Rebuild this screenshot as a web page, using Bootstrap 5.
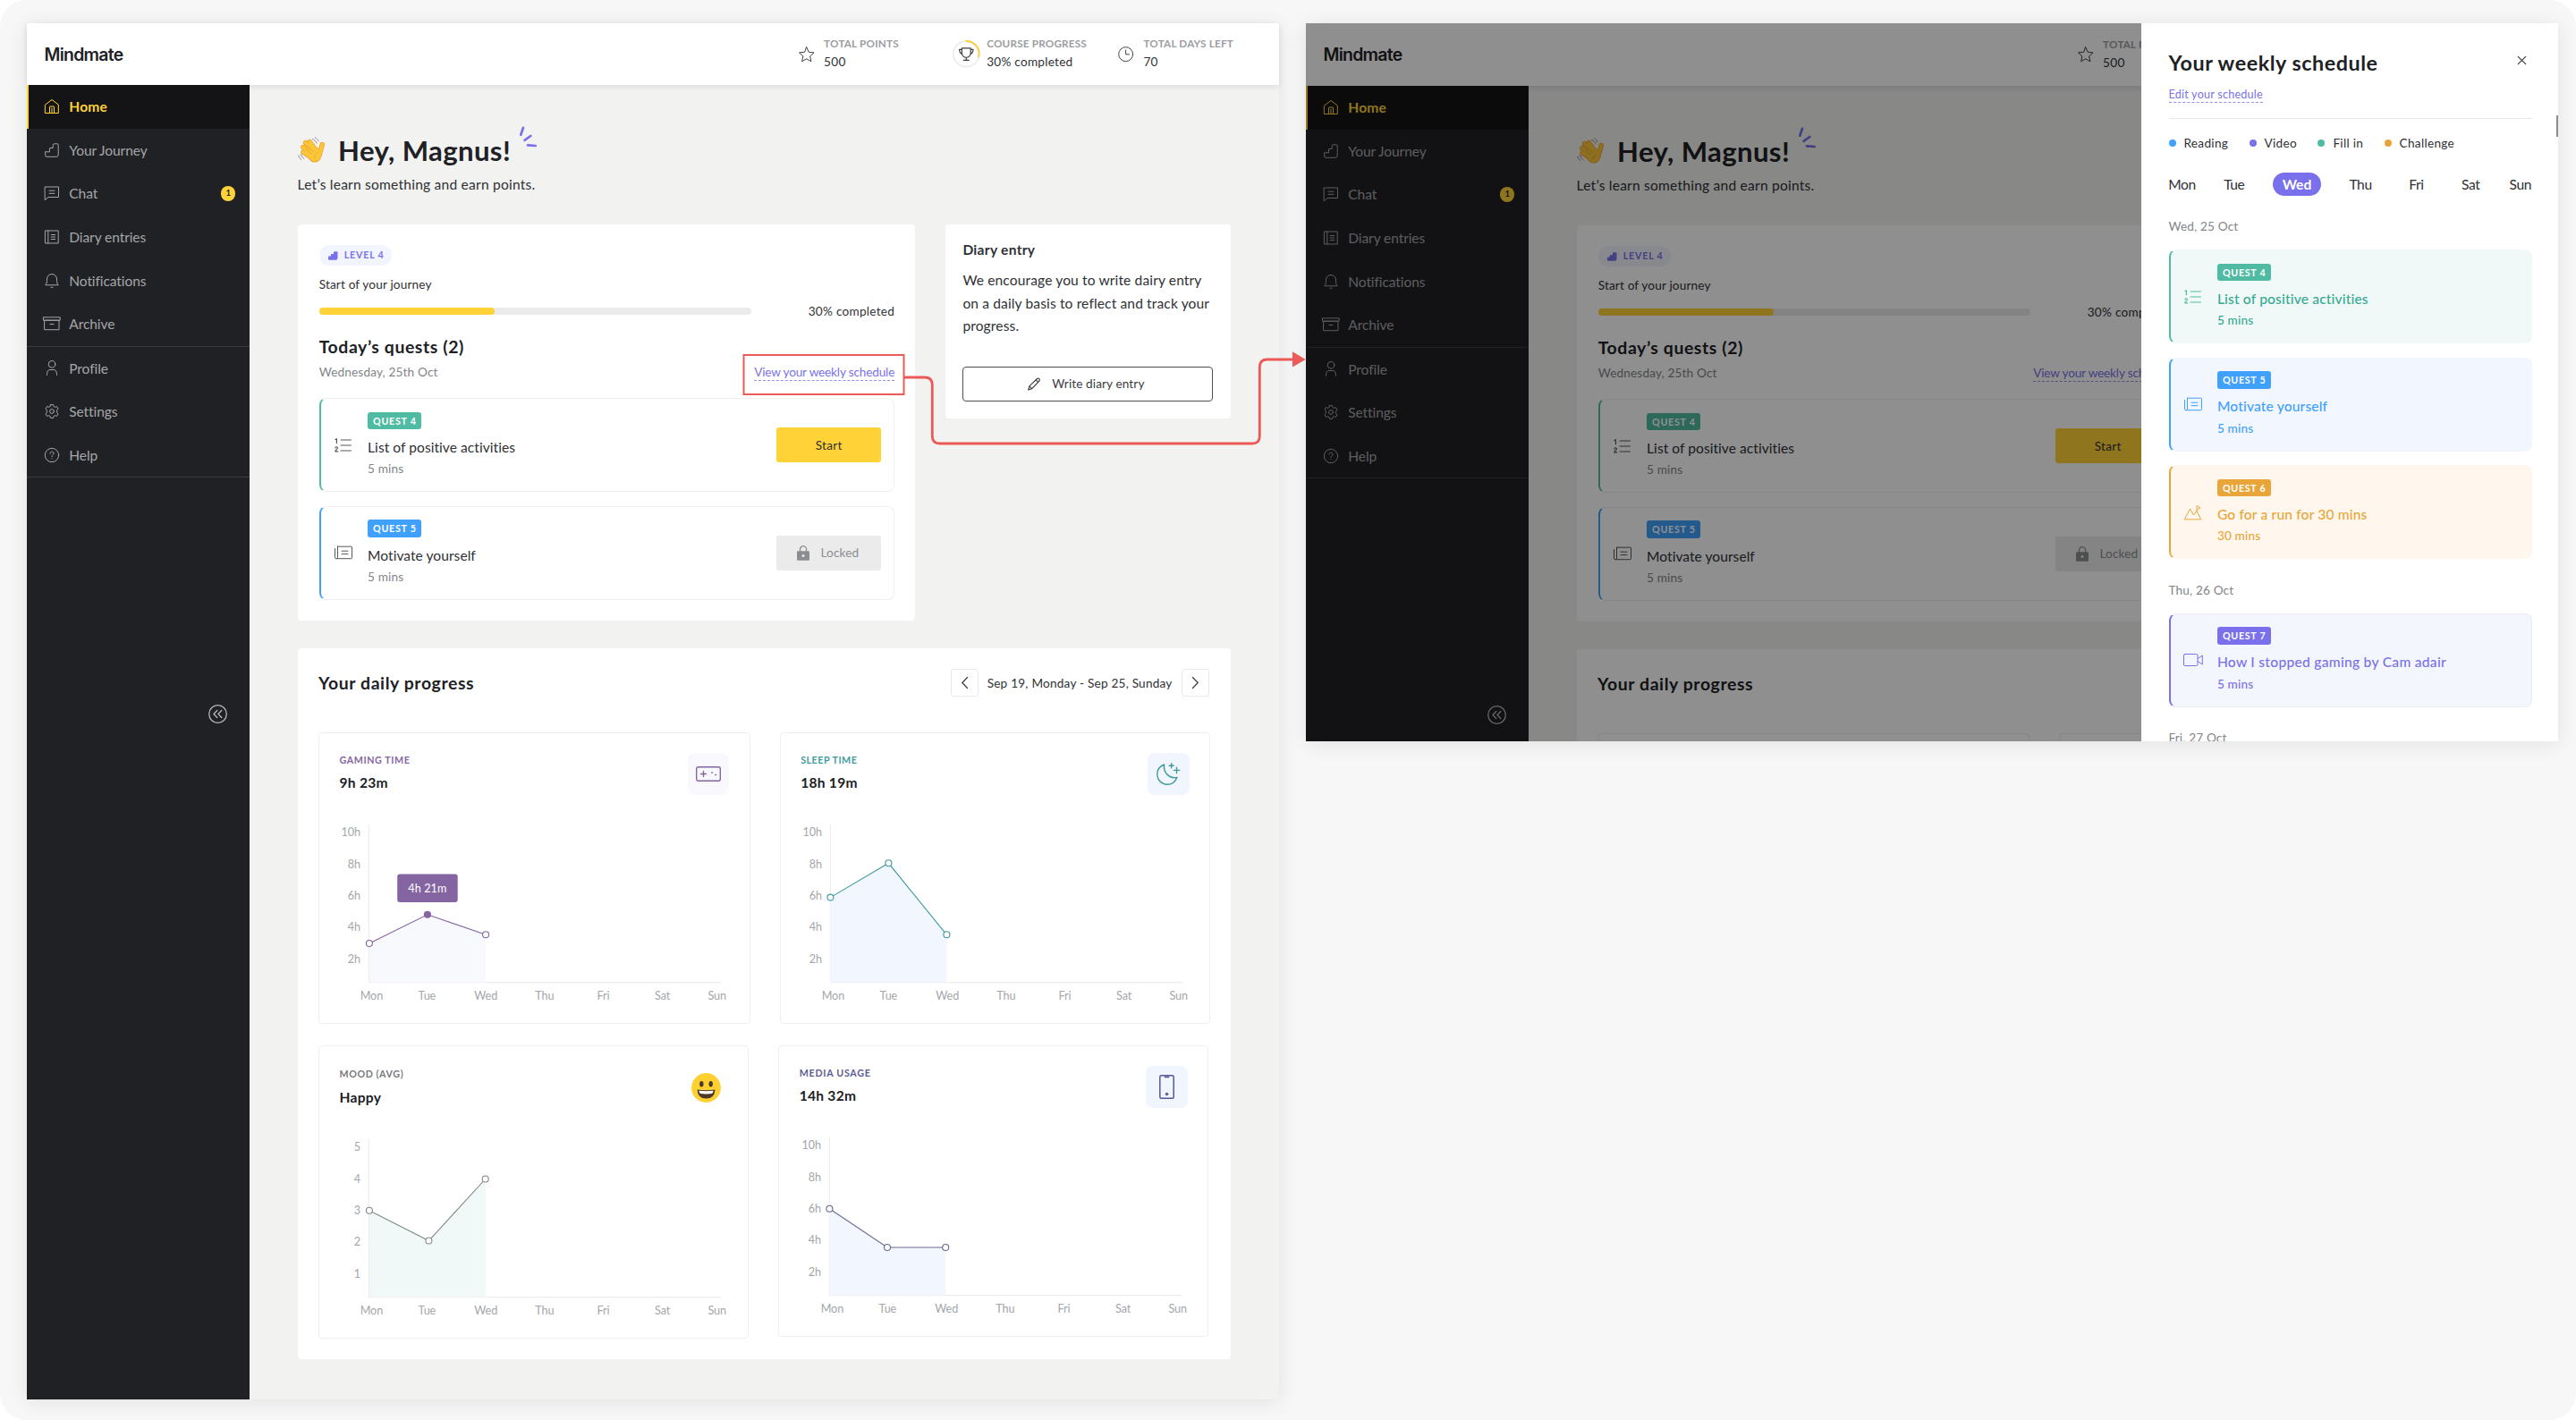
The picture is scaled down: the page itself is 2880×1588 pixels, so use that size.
<!DOCTYPE html>
<html lang="en">
<head>
<meta charset="utf-8">
<meta name="viewport" content="width=device-width, initial-scale=1">
<title>Mindmate</title>
<link href="https://cdn.jsdelivr.net/npm/bootstrap@5.3.0/dist/css/bootstrap.min.css" rel="stylesheet">
<style>
  body { font-family: Lato, "Open Sans", sans-serif; font-size: 15.55px; letter-spacing: .1px; color: #2f3136; background: #fff; overflow: hidden; }
  svg.ico { fill: none; stroke: currentColor; stroke-width: 1; stroke-linecap: round; stroke-linejoin: round; flex: none; overflow: visible; display: block; }
  .board { width: 2880px; height: 1588px; background: #f7f7f7; border-radius: 30px; padding: 26px 20px 0 30px; gap: 30px; }
  .screen { width: 1400px; flex: none; background: #f2f2f0; box-shadow: 0 3px 22px rgba(0,0,0,.09); --head: 69px; }
  .screen-full { height: 1538.5px; }
  .screen-short { height: 803.3px; --head: 70px; }

  /* top bar */
  .topbar { height: var(--head); flex: none; background: #fff; box-shadow: 0 2px 6px rgba(70,70,110,.13); z-index: 1; padding-left: 19.5px; }
  .brand { font: 600 19.4px/24px Inter, sans-serif; letter-spacing: -.72px; color: #202125; }
  .stat { line-height: 21px; font-size: 13.6px; letter-spacing: .25px; }
  .stat-a { width: 172px; } .stat-b { width: 185.2px; } .stat-c { width: 180px; }
  .stat-label { font-size: 11.7px; font-weight: 700; color: #9b9da1; letter-spacing: .2px; }

  /* sidebar */
  .side { width: 249px; background: #202125; color: #a5a6a8; z-index: 2; flex: none; }
  .side-item { height: 48.6px; flex: none; padding-left: 19.6px; padding-right: 15.6px; letter-spacing: -.1px; line-height: 24px; }
  .side-item svg { margin-right: 11.7px; }
  .side-item.on { background: #141416; color: #ffd237; font-weight: 700; letter-spacing: .2px; box-shadow: inset 2px 0 #ffd237; }
  .side-rule { height: 1px; flex: none; background: #3a3b3f; }
  .count-dot { width: 16.4px; height: 16.4px; border-radius: 50%; background: #ffd237; color: #202125; font-size: 9.5px; font-weight: 700; }
  .collapse-btn { margin: 254px 25px 0 0; color: #b5b6b8; }

  /* main */
  .main { padding: 53px 54.6px 0 53.6px; }
  .hello { font-size: 31.1px; line-height: 40px; font-weight: 700; letter-spacing: .38px; color: #202125; }
  .hello-sub { line-height: 24px; letter-spacing: .23px; margin-top: 6px; }
  .panel { background: #fff; border-radius: 4px; }
  .journey { width: 690.6px; height: 443px; padding: 23px 23px 0 24.1px; flex: none; }
  .level { height: 23px; padding: 0 8.2px 0 10.5px; border-radius: 12px; background: #f3f5fe; color: #7a72ea; font-size: 10.7px; font-weight: 700; letter-spacing: .8px; gap: 7px; }
  .t14 { font-size: 13.6px; line-height: 20px; letter-spacing: .16px; }
  .track { height: 8px; width: 483px; border-radius: 4px; background: #ebebeb; }
  .track > div { height: 8px; border-radius: 4px; background: #ffd237; }
  .h-20 { font-size: 19.4px; line-height: 26px; font-weight: 700; letter-spacing: .6px; color: #202125; }
  .soft { color: #828487; }
  .dash-link { color: #7a72ea; line-height: 17px; border-bottom: 1px dashed #8f93ee; letter-spacing: -.16px; font-size: 13.6px; text-decoration: none; }

  .quest { height: 104.9px; border: 1px solid #efefef; border-left: 2px solid var(--qc); border-radius: 8px; padding-right: 14.2px; }
  .quest + .quest { margin-top: 15.7px; }
  .quest-ico { width: 50.4px; margin-right: 2px; align-self: center; color: #55575b; }
  .quest-body { padding-top: 14.5px; }
  .quest-tag { width: fit-content; height: 19.6px; line-height: 19.6px; padding: 0 5.3px 0 6px; border-radius: 3px; background: var(--qc); color: #fff; font-size: 10.7px; font-weight: 700; letter-spacing: .72px; }
  .quest-name { line-height: 24px; margin-top: 7.5px; letter-spacing: .05px; }
  .green { --qc: #4fbba2; --qt: #36a992; --qb: #f1f9f8; }
  .blue { --qc: #3fa0fd; --qt: #3fa0fd; --qb: #f2f6fe; }
  .amber { --qc: #e9a539; --qt: #e9a539; --qb: #fff7ee; }
  .violet { --qc: #7a70ec; --qt: #7a70ec; --qb: #f3f6fd; }
  .act { width: 116.8px; height: 39px; border: 0; border-radius: 3px; background: #ffd237; color: #2f3136; font-size: 13.6px; letter-spacing: .28px; align-self: center; padding: 0; }
  .act-off { background: #ebebeb; color: #8b8d90; gap: 12.5px; letter-spacing: .12px; padding-right: 2px; }

  .diary { width: 318.8px; height: 217px; padding: 16px 19.4px 0 19.4px; }
  .diary-copy { line-height: 25.3px; margin: 10.3px 0 32.6px; letter-spacing: .135px; white-space: nowrap; }
  .act-line { width: 100%; height: 39px; border: 1.5px solid #4c4e52; border-radius: 4px; background: #fff; font-size: 13.6px; letter-spacing: .11px; gap: 12.5px; color: #3a3c40; padding: 0 4px 0 0; }

  .progress-panel { height: 794.7px; margin-top: 31.3px; padding: 23.2px 23px 0 23.5px; }
  .pager-btn { width: 31px; height: 31px; border: 1px solid #e9e9ea; border-radius: 3px; background: #fff; color: #3a3c40; padding: 0; }
  .tile-row { margin-top: 39.2px; gap: 33.2px; }
  .tile-row + .tile-row { margin-top: 24px; }
  .chart-box { height: 326px; border: 1px solid #efefef; border-radius: 4px; padding: 22.3px 22.2px 0 22.4px; flex: none; width: 481px; }
  .chart-wide { width: 482.5px; } .chart-tall { height: 328px; }
  .chart-head { height: 46.8px; }
  .chart-tall .chart-head { height: 49px; padding-top: 1px; }
  .metric { font-size: 10.7px; font-weight: 700; line-height: 16px; letter-spacing: .6px; }
  .metric-val { font-weight: 700; line-height: 24px; margin-top: 4.7px; letter-spacing: .28px; color: #202125; }
  .badge-tile { width: 46.8px; height: 46.8px; border-radius: 8px; background: #f1f5fe; }
  .plot { display: block; margin-top: 33px; overflow: visible; font-size: 12.6px; fill: #a3a6aa; letter-spacing: -.05px; }
  .plot .tip { fill: #fff; letter-spacing: .1px; }

  /* schedule drawer over the dimmed screen */
  .dim { inset: 0; background: rgba(0,0,0,.44); z-index: 5; }
  .drawer { top: 0; right: 0; bottom: 0; width: 466.4px; z-index: 6; background: #fff; padding: 28px 29px 0 30.9px; overflow: hidden; }
  .drawer h2 { font-size: 23.3px; line-height: 32px; font-weight: 700; letter-spacing: .55px; margin: 0; color: #202125; }
  .drawer .dash-link { font-size: 12.6px; line-height: 16px; letter-spacing: .22px; }
  .drawer-rule { height: 1px; background: #e8e8e8; margin: 17.5px 0 17.2px; }
  .key { font-size: 13.6px; line-height: 20px; letter-spacing: .3px; gap: 9px; margin-right: 23.4px; }
  .key i { width: 8px; height: 8px; border-radius: 50%; }
  .days { margin: 23.3px 0 24.3px; height: 25.4px; letter-spacing: -.4px; }
  .day { display: flex; justify-content: center; white-space: nowrap; }
  .day-on { width: 54px; height: 25.4px; border-radius: 13px; background: #7a70ec; color: #fff; font-weight: 700; letter-spacing: 0; }
  .drawer .quest { background: var(--qb); border-color: var(--qb); border-left-color: var(--qc); color: var(--qt); font-weight: 500; }
  .drawer .quest.violet { border-color: #eaecf2; border-left-color: var(--qc); }
  .drawer .quest-ico { color: var(--qc); }
  .drawer .quest-name { letter-spacing: .17px; }
  .drawer .violet .quest-name { letter-spacing: .3px; }
  .date-head { margin: 0 0 16px; }
  .quest + .date-head { margin-top: 24.5px; }
  .thumb { right: 0; top: 103px; width: 2px; height: 23.5px; background: #8b8c90; }
  .flow-line { left: 0; top: 0; z-index: 10; pointer-events: none; }
</style>
<script src="https://cdn.jsdelivr.net/npm/bootstrap@5.3.0/dist/js/bootstrap.bundle.min.js"></script>
</head>
<body>
<svg width="0" height="0" class="position-absolute">
  <symbol id="i-list" viewBox="0 0 19 16"><path d="M7 2h11.500M7 8h11.500M7 14h11.500" fill="none"/><path d="M1 1.500 2.400.7V5.600" fill="none" stroke-width="1.200"/><path d="M.8 10.900c.2-1.600 2.700-1.500 2.600.1-.1 1.200-2.200 2.200-2.600 3.900h2.900" fill="none" stroke-width="1.200"/></symbol>
  <symbol id="i-news" viewBox="0 0 20 16"><path d="M3.500 1.200h15.200q.8 0 .8.8v11.800q0 .9-.9.9H1.900Q.5 14.700.5 13.200V3.500M3.500 1.200v12q0 1.500-1.300 1.500M8 6.200h7M8 9.600h7" fill="none"/></symbol>
</svg>

<div class="board d-flex align-items-start position-relative">

  <div class="screen screen-full d-flex flex-column overflow-visible" id="home">
    <header class="topbar d-flex align-items-center position-relative">
      <div class="brand me-auto">Mindmate</div>
      <div class="stat stat-a d-flex align-items-center">
        <svg class="ico" width="17.500" height="17.500" viewBox="0 0 18 18" style="stroke:#3a3c40"><path d="m9 .8 2.500 5.600 6 .7-4.500 4.100 1.300 6L9 14.200l-5.300 3 1.300-6L.5 7.100l6-.7z"/></svg>
        <div style="margin:-3px 0 0 10.800px"><div class="stat-label">TOTAL POINTS</div><div>500</div></div>
      </div>
      <div class="stat stat-b d-flex align-items-center">
        <svg class="ico" width="30.600" height="30.600" viewBox="0 0 31 31" style="color:#3a3c40"><circle cx="15.500" cy="15.500" r="14.500" stroke="#ececec" stroke-width="1.800"/><path d="M15.500 1A14.500 14.500 0 0 1 29.600 18.800" stroke="#ffc93a" stroke-width="1.800"/><path d="M10.500 9h10v5.500a5 5 0 0 1-10 0zM10.500 10.500H7.700c0 3 .8 4.500 3.200 5M20.500 10.500h2.800c0 3-.8 4.500-3.200 5M15.500 19.500v3M12.500 22.600h6" stroke-width="1.200"/></svg>
        <div style="margin:-3px 0 0 7.800px"><div class="stat-label">COURSE PROGRESS</div><div>30% completed</div></div>
      </div>
      <div class="stat stat-c d-flex align-items-center">
        <svg class="ico" width="17.300" height="17.300" viewBox="0 0 18 18" style="color:#3a3c40"><circle cx="9" cy="9" r="8.300"/><path d="M9 4v5.200h4"/></svg>
        <div style="margin:-3px 0 0 11.100px"><div class="stat-label">TOTAL DAYS LEFT</div><div>70</div></div>
      </div>
    </header>

    <div class="d-flex flex-grow-1">
      <nav class="side d-flex flex-column">
        <div class="side-item on d-flex align-items-center"><svg class="ico" width="16" height="16" viewBox="0 0 16 16"><path d="M.7 6 8 .5 15.300 6v9.500H.7zM5.500 15.500V8.500q0-.5.500-.5h4q.5 0 .5.500v7M8 10v5.500"/></svg>Home</div>
        <div class="side-item d-flex align-items-center"><svg class="ico" width="16" height="16" viewBox="0 0 16 16"><path d="M.8 9.800h4.700V6q0-.5.500-.5h3.200V2.300q0-1.500 1.500-1.500h3.200q1.300 0 1.300 1.300v11q0 2.200-2.200 2.200H2q-1.200 0-1.200-1.200z"/></svg>Your Journey</div>
        <div class="side-item d-flex align-items-center"><svg class="ico" width="16" height="16" viewBox="0 0 16 16"><path d="M.5 1h15v11.500H4L.5 15.500zM5 5.200h6M5 8.300h6"/></svg>Chat<span class="count-dot d-flex align-items-center justify-content-center ms-auto">1</span></div>
        <div class="side-item d-flex align-items-center"><svg class="ico" width="16" height="16" viewBox="0 0 16 16"><path d="M.8 1h14.400v14H.8zM3.800 1v14M7.200 5.500h4.500M7.200 8h4.500M7.200 10.500h4.500"/></svg>Diary entries</div>
        <div class="side-item d-flex align-items-center"><svg class="ico" width="16" height="17" viewBox="0 0 16 17"><path d="M1 13.500c1.300-1.500 1.500-3 1.500-6.500a5.500 5.500 0 0 1 11 0c0 3.500.2 5 1.500 6.500zM7 16.300h2"/></svg>Notifications</div>
        <div class="side-item d-flex align-items-center"><svg class="ico" width="16" height="16" viewBox="0 0 16 16"><path d="M-1.200.8h18.400v3.400H-1.200zM0 4.200h16v10.500H0zM6 8.500h4"/></svg>Archive</div>
        <div class="side-rule"></div>
        <div class="side-item d-flex align-items-center"><svg class="ico" width="16" height="17" viewBox="0 0 16 17"><circle cx="8" cy="4.300" r="3.800"/><path d="M2.500 16.500c0-4 1-6 3.500-6h4c2.500 0 3.500 2 3.500 6"/></svg>Profile</div>
        <div class="side-item d-flex align-items-center"><svg class="ico" width="16" height="16" viewBox="0 0 16 16"><circle cx="8" cy="8" r="2.400"/><path d="M6.500.6h3l.5 2 1.400.7 2-.7 1.600 2.400-1.300 1.600v2.800l1.300 1.600-1.600 2.400-2-.7-1.400.7-.5 2h-3l-.5-2-1.400-.7-2 .7L1 11l1.300-1.600V6.600L1 5l1.600-2.400 2 .7L6 2.600z"/></svg>Settings</div>
        <div class="side-item d-flex align-items-center"><svg class="ico" width="16" height="16" viewBox="0 0 16 16"><circle cx="8" cy="8" r="7.700"/><path d="M5.900 6.200c.1-2.900 4.300-2.700 4.200-.1C10 7.700 8 7.600 8 9.500M8 11.700v.2"/></svg>Help</div>
        <div class="side-rule"></div>
        <div class="collapse-btn align-self-end"><svg class="ico" width="21" height="21" viewBox="0 0 21 21"><circle cx="10.500" cy="10.500" r="9.800" stroke-width="1.300"/><path d="m9.800 6.500-3.800 4 3.800 4M14.800 6.500l-3.800 4 3.800 4" stroke-width="1.300"/></svg></div>
      </nav>

      <main class="main flex-grow-1">
        <div class="hello d-flex align-items-center">
          <svg width="31" height="30" viewBox="0 0 31 30" fill="none" stroke-linecap="round" style="margin:-1px 14px 0 .5px"><g stroke="#e9a02f" stroke-width="5.400"><path d="M6 17l9 6M5.800 11.500 16 20M8.500 6.500 18 17M13.300 5.500 21 16M27.300 8.500 24.500 19"/></g><ellipse cx="18.800" cy="20" rx="7.900" ry="8.600" fill="#e9a02f"/><g stroke="#fbc638" stroke-width="3.900"><path d="M6 17l9 6M5.800 11.500 16 20M8.500 6.500 18 17M13.300 5.500 21 16M27.300 8.500 24.500 19"/></g><ellipse cx="18.900" cy="19.900" rx="7.100" ry="7.700" fill="#fbc638"/><path d="M9 14l6 5M11.500 10.500l6 6.500M22 18c-2.500 1-3.500 3-3.300 5.500" stroke="#e9a02f" stroke-width=".8"/><path d="M16.500 2.500c2 .8 3.600 2.300 4.500 4.500M19.300.8c1.800.9 3 2.100 3.700 4M3.500 19.500c.5 2.200 1.600 3.900 3.400 5M.8 21c.5 2 1.500 3.500 3 4.500" stroke="#8a8c90" stroke-width="1"/></svg>
          <span>Hey, Magnus!</span>
          <svg width="21" height="24" viewBox="0 0 21 24" fill="none" stroke="#7a70ec" stroke-width="2.700" stroke-linecap="round" style="margin:-30px 0 0 9px"><path d="M5 1.800 2.300 9.800M13.300 11l-6.800 4.800M10 21.300l8.800.7"/></svg>
        </div>
        <div class="hello-sub">Let’s learn something and earn points.</div>

        <div class="d-flex align-items-start justify-content-between" style="margin-top:33px">
          <section class="panel journey">
            <div class="d-flex"><div class="level d-flex align-items-center"><svg width="10.500" height="10" viewBox="0 0 11 10"><path d="M0 6.500q0-1 1-1h2V4q0-1 1-1h2.300V1q0-1 1-1H10q1 0 1 1v6q0 3-3 3H1Q0 10 0 9z" fill="#7a72ea"/></svg>LEVEL 4</div></div>
            <div class="t14" style="margin-top:11px">Start of your journey</div>
            <div class="d-flex align-items-center justify-content-between t14" style="margin-top:10px"><div class="track"><div style="width:40.700%"></div></div><span style="letter-spacing:.27px">30% completed</span></div>
            <div class="h-20" style="margin-top:16.500px">Today’s quests (2)</div>
            <div class="d-flex justify-content-between align-items-start t14 soft" style="margin:5px 0 19.900px"><span>Wednesday, 25th Oct</span><a class="dash-link" href="#" style="margin-top:2px">View your weekly schedule</a></div>
            <div class="quest green d-flex">
              <div class="quest-ico d-flex justify-content-center"><svg class="ico" width="19" height="16"><use href="#i-list"/></svg></div>
              <div class="quest-body"><div class="quest-tag">QUEST 4</div><div class="quest-name">List of positive activities</div><div class="t14 soft" style="margin-top:2.500px">5 mins</div></div>
              <button class="act ms-auto">Start</button>
            </div>
            <div class="quest blue d-flex">
              <div class="quest-ico d-flex justify-content-center"><svg class="ico" width="20" height="16"><use href="#i-news"/></svg></div>
              <div class="quest-body"><div class="quest-tag">QUEST 5</div><div class="quest-name">Motivate yourself</div><div class="t14 soft" style="margin-top:2.500px">5 mins</div></div>
              <button class="act act-off ms-auto d-flex align-items-center justify-content-center"><svg width="14" height="17" viewBox="0 0 14 17"><path d="M3.500 7V4.200a3.500 3.500 0 0 1 7 0V7" fill="none" stroke="#8b8d90" stroke-width="1.300"/><rect y="6.300" width="14" height="10.500" rx="1.200" fill="#8b8d90"/><circle cx="7" cy="11.600" r="1.500" fill="#ebebeb"/></svg>Locked</button>
            </div>
          </section>

          <section class="panel diary">
            <div style="font-weight:700;line-height:24px;letter-spacing:.3px">Diary entry</div>
            <div class="diary-copy">We encourage you to write dairy entry<br>on a daily basis to reflect and track your<br>progress.</div>
            <button class="act-line d-flex align-items-center justify-content-center"><svg class="ico" width="14.500" height="15" viewBox="0 0 15 15" style="stroke-width:1.200"><path d="M.8 14.200 2 10 10.800 1.300q1.200-1 2.400.2 1.200 1.200.2 2.400L4.800 12.900zM9.500 2.700l2.600 2.600M2 10l2.800 2.900"/></svg>Write diary entry</button>
          </section>
        </div>

        <section class="panel progress-panel">
          <div class="d-flex align-items-center justify-content-between">
            <div class="h-20">Your daily progress</div>
            <div class="pager d-flex align-items-center t14" style="gap:10px;letter-spacing:.22px;margin-right:1.200px">
              <button class="pager-btn d-flex align-items-center justify-content-center"><svg class="ico" width="7" height="13" viewBox="0 0 7 13" style="stroke-width:1.200"><path d="M6.500.5.8 6.500l5.700 6"/></svg></button>
              <span>Sep 19, Monday - Sep 25, Sunday</span>
              <button class="pager-btn d-flex align-items-center justify-content-center"><svg class="ico" width="7" height="13" viewBox="0 0 7 13" style="stroke-width:1.200"><path d="M.5.5l5.700 6-5.700 6"/></svg></button>
            </div>
          </div>
          <div class="tile-row d-flex">
            <div class="chart-box chart-wide">
              <div class="chart-head d-flex justify-content-between"><div><div class="metric" style="color:#8465a2">GAMING TIME</div><div class="metric-val">9h 23m</div></div>
              <div class="badge-tile d-flex align-items-center justify-content-center" style="background:#f9f9fd"><svg class="ico" width="28" height="17" viewBox="0 0 28 17" style="color:#8465a2"><rect x=".7" y=".7" width="26.600" height="15.600" rx="2" stroke-width="1.400"/><path d="M8.500 5.500v6M5.500 8.500h6" stroke-width="1.400"/><path d="M17.500 7h.8M21.700 9.500h.8" stroke-width="1.300"/></svg></div></div>
              <svg class="plot" data-kind="gaming"></svg>
            </div>
            <div class="chart-box">
              <div class="chart-head d-flex justify-content-between"><div><div class="metric" style="color:#3f9a9c;letter-spacing:.5px">SLEEP TIME</div><div class="metric-val">18h 19m</div></div>
              <div class="badge-tile d-flex align-items-center justify-content-center"><svg class="ico" width="26" height="25" viewBox="0 0 26 25" style="color:#3f9a9c;stroke-width:1.400"><path d="M8.500 2C3.500 4 .8 8 .8 12.800.8 19.500 6 24.300 12 24.300c5 0 9-2.800 11-7.800-8.500 1.500-15.500-5-14.500-14.500zM16.700.7v5M14.200 3.200h5M22.500 5.200v6.400M19.300 8.400h6.400"/></svg></div></div>
              <svg class="plot" data-kind="sleep"></svg>
            </div>
          </div>
          <div class="tile-row d-flex">
            <div class="chart-box chart-tall">
              <div class="chart-head d-flex justify-content-between"><div><div class="metric" style="color:#77797d">MOOD (AVG)</div><div class="metric-val" style="margin-top:6px">Happy</div></div>
              <svg width="33" height="33" viewBox="0 0 33 33" style="margin:7.500px 7.500px 0 0"><circle cx="16.500" cy="16.500" r="16.400" fill="#ffd02f"/><ellipse cx="11.300" cy="12.300" rx="2.200" ry="3.200" fill="#4a3a2a"/><ellipse cx="21.700" cy="12.300" rx="2.200" ry="3.200" fill="#4a3a2a"/><path d="M6.500 18.500q10 1.400 20 0Q26 28.500 16.500 28.500T6.500 18.500z" fill="#4a3a2a"/><path d="M8.500 19.800q8 .9 16 0-.2 3-1.700 3.300-6.300.6-12.600 0-1.500-.3-1.700-3.300z" fill="#fff"/></svg></div>
              <svg class="plot" data-kind="mood"></svg>
            </div>
            <div class="chart-box">
              <div class="chart-head d-flex justify-content-between"><div><div class="metric" style="color:#5c5c94;letter-spacing:.73px">MEDIA USAGE</div><div class="metric-val">14h 32m</div></div>
              <div class="badge-tile d-flex align-items-center justify-content-center"><svg class="ico" width="17" height="27" viewBox="0 0 17 27" style="color:#555a96"><rect x=".8" y=".8" width="15.400" height="25.400" rx="1.500" stroke-width="1.500"/><path d="M6.500 2.300h4" stroke-width="1.800"/><circle cx="8.500" cy="21.500" r="1.300" fill="#555a96"/></svg></div></div>
              <svg class="plot" data-kind="media"></svg>
            </div>
          </div>
        </section>
      </main>
    </div>
  </div>

  <div class="screen-short position-relative" id="second">
    <div class="dim position-absolute"></div>
    <aside class="drawer position-absolute">
      <div class="d-flex justify-content-between align-items-start">
        <h2>Your weekly schedule</h2>
        <svg class="ico" width="9" height="9" viewBox="0 0 9 9" style="color:#3a3c40;stroke-width:1.200;margin:8.500px 7.300px 0 0"><path d="M.3.300l8.400 8.400M8.700.300.300 8.700"/></svg>
      </div>
      <div class="d-flex" style="margin-top:11.500px"><a class="dash-link" href="#">Edit your schedule</a></div>
      <div class="drawer-rule"></div>
      <div class="d-flex">
        <div class="key d-flex align-items-center"><i style="background:#3fa0fd"></i>Reading</div>
        <div class="key d-flex align-items-center"><i style="background:#7a70ec"></i>Video</div>
        <div class="key d-flex align-items-center"><i style="background:#4fbba2"></i>Fill in</div>
        <div class="key d-flex align-items-center"><i style="background:#e9a539"></i>Challenge</div>
      </div>
      <div class="days d-flex justify-content-between align-items-center"><span class="day" style="width:30px">Mon</span><span class="day" style="width:24.300px">Tue</span><span class="day day-on align-items-center">Wed</span><span class="day" style="width:26px">Thu</span><span class="day" style="width:36.700px">Fri</span><span class="day" style="width:22.600px">Sat</span><span class="day" style="width:26.300px">Sun</span></div>
      <div class="t14 soft date-head">Wed, 25 Oct</div>
      <div class="quest green d-flex"><div class="quest-ico d-flex justify-content-center"><svg class="ico" width="19" height="16"><use href="#i-list"/></svg></div><div class="quest-body"><div class="quest-tag">QUEST 4</div><div class="quest-name">List of positive activities</div><div class="t14" style="margin-top:2.500px">5 mins</div></div></div>
      <div class="quest blue d-flex"><div class="quest-ico d-flex justify-content-center"><svg class="ico" width="20" height="16"><use href="#i-news"/></svg></div><div class="quest-body"><div class="quest-tag">QUEST 5</div><div class="quest-name">Motivate yourself</div><div class="t14" style="margin-top:2.500px">5 mins</div></div></div>
      <div class="quest amber d-flex"><div class="quest-ico d-flex justify-content-center"><svg class="ico" width="19" height="16" viewBox="0 0 19 16"><path d="M.5 15.500 6.500 4l4 7 3.500-4.500 4.500 9zM14 6.500V.6l4 2.300-4 2"/></svg></div><div class="quest-body"><div class="quest-tag">QUEST 6</div><div class="quest-name">Go for a run for 30 mins</div><div class="t14" style="margin-top:2.500px">30 mins</div></div></div>
      <div class="t14 soft date-head">Thu, 26 Oct</div>
      <div class="quest violet d-flex"><div class="quest-ico d-flex justify-content-center"><svg class="ico" width="22" height="14" viewBox="0 0 22 14"><rect x=".5" y=".5" width="15.500" height="13" rx="1.500"/><path d="M16.200 5.500 21.300 2v10l-5.100-3.500"/></svg></div><div class="quest-body"><div class="quest-tag">QUEST 7</div><div class="quest-name">How I stopped gaming by Cam adair</div><div class="t14" style="margin-top:2.500px">5 mins</div></div></div>
      <div class="t14 soft date-head">Fri, 27 Oct</div>
      <div class="thumb position-absolute"></div>
    </aside>
  </div>

  <svg class="flow-line position-absolute" width="2880" height="1588" fill="none" stroke="#ec5a57">
    <rect x="831.500" y="397" width="179" height="44" stroke-width="2"/>
    <path d="M1011 422h23q8.300 0 8.300 8.300V487.500q0 8.500 8.500 8.500H1400q8.300 0 8.300-8.500V410.500q0-8.500 8.500-8.500H1446" stroke-width="2.800"/>
    <path d="M1445 393.300 1459.700 402 1445 410.500z" fill="#ec5a57" stroke="none"/>
  </svg>
</div>

<script>
  const days = ['Mon', 'Tue', 'Wed', 'Thu', 'Fri', 'Sat', 'Sun'];
  const dayX = [3, 65, 130.800, 196.500, 262, 328.300, 389.300];
  const hours = ['10h', '8h', '6h', '4h', '2h'];
  const charts = {
    gaming: { ticks: hours, line: '#8465a2', area: '#f8f9fd', pts: [[.5, 133], [65.500, 100.800], [130.700, 123.300]], tip: '4h 21m' },
    sleep:  { ticks: hours, line: '#3f9a9c', area: '#f1f6ff', pts: [[0, 81.600], [65, 43.300], [130, 123.300]] },
    mood:   { ticks: [5, 4, 3, 2, 1], line: '#85888b', area: '#f1f9f8', pts: [[.5, 79.800], [67, 113.500], [130.300, 44.500]] },
    media:  { ticks: hours, line: '#6b6794', area: '#f2f6ff', pts: [[0, 79.700], [64.600, 123], [129.800, 123]] }
  };
  const ax = 33.400, base = 176.600;
  document.querySelectorAll('.plot').forEach(svg => {
    const c = charts[svg.dataset.kind];
    svg.setAttribute('width', 435);
    svg.setAttribute('height', 200);
    const p = c.pts.map(([x, y]) => [x + ax, y]);
    const path = p.map(q => q.join(' ')).join('L');
    let s = `<path d="M${ax} 0V${base}H${ax + 393.500}" fill="none" stroke="#ededee" stroke-width="1.200"/>`;
    s += `<path d="M${path}V${base}H${p[0][0]}z" fill="${c.area}"/><path d="M${path}" fill="none" stroke="${c.line}" stroke-width="1.100"/>`;
    p.forEach(([x, y], i) => s += `<circle cx="${x}" cy="${y}" r="3.500" fill="${c.tip && i === 1 ? c.line : '#fff'}" stroke="${c.line}" stroke-width="1.100"/>`);
    c.ticks.forEach((t, i) => s += `<text x="${ax - 9.300}" y="${13.400 + i * 35.300}" text-anchor="end">${t}</text>`);
    days.forEach((t, i) => s += `<text x="${ax + dayX[i]}" y="195.500" text-anchor="middle">${t}</text>`);
    if (c.tip) s += `<rect x="${ax + 31.800}" y="55.600" width="67.500" height="31.400" rx="3" fill="${c.line}"/><text class="tip" x="${ax + 65.500}" y="75.700" text-anchor="middle">${c.tip}</text>`;
    svg.innerHTML = s;
  });

  /* the schedule drawer opens over a clipped copy of the home screen;
     everything below the fold or fully behind the drawer is dropped */
  const copy = document.getElementById('home').cloneNode(true);
  copy.removeAttribute('id');
  copy.classList.replace('screen-full', 'screen-short');
  copy.classList.replace('overflow-visible', 'overflow-hidden');
  copy.querySelectorAll('.plot, .chart-head, .diary, .pager, .tile-row + .tile-row').forEach(n => n.remove());
  copy.querySelectorAll('.stat-b, .stat-c').forEach(n => n.replaceChildren());
  copy.querySelector('.progress-panel > div').style.height = '31px';
  document.getElementById('second').prepend(copy);
</script>
</body>
</html>
